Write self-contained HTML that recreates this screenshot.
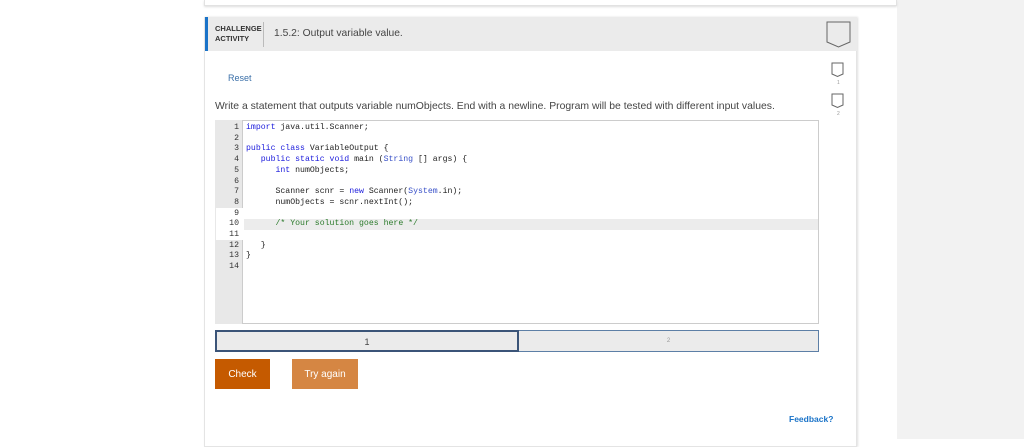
<!DOCTYPE html>
<html><head><meta charset="utf-8"><style>
*{margin:0;padding:0;box-sizing:border-box}
body{width:1024px;height:439px;background:#fff;position:relative;overflow:hidden;font-family:"Liberation Sans",sans-serif}
.abs{position:absolute}
.rbg{left:897px;top:0;width:127px;height:439px;background:#f2f2f2}
.top{left:204px;top:0;width:693px;height:6px;border:1px solid #e2e2e2;border-top:none;box-shadow:0 1px 2px #ddd}
.card{left:204px;top:17px;width:653px;height:430px;border:1px solid #e4e4e4;box-shadow:1px 0 2px #e0e0e0}
.hdr{left:205px;top:17px;width:652px;height:34px;background:#ebebeb;border-left:3px solid #1a73c8}
.ca{left:215px;top:24px;font-size:7.5px;font-weight:bold;color:#333;line-height:10px}
.sep{left:263px;top:22px;width:1px;height:25px;background:#bbb}
.ttl{left:274px;top:28px;font-size:10.3px;color:#444}
.reset{left:228px;top:73px;font-size:9px;color:#3a6fa8}
.inst{left:215px;top:101px;font-size:10.4px;color:#444;white-space:nowrap}
.ed{left:215px;top:120px;width:604px;height:204px;border:1px solid #ccc;background:#fff}
.gut{left:215px;top:120px;width:28px;height:204px;background:#e8e8e8;border-right:1px solid #ccc}
.code{left:215px;top:123px;font-family:"Liberation Mono",monospace;font-size:8.2px;line-height:10.7px;white-space:pre;color:#222}
.ln{display:inline-block;width:24px;text-align:right;margin-right:7px;color:#333}
.k{color:#1b1bdc}.c{color:#2a7a2a}.s{color:#3850c8}
.hl{left:244px;top:219px;width:574px;height:10.7px;background:#ececec}
.pb{top:330px;height:22px;background:#ebebeb;font-size:9px;text-align:center;line-height:20px}
.bt{top:359px;height:30px;color:#fff;font-size:10px;text-align:center;line-height:31px}
.fb{left:789px;top:414px;font-size:8.5px;font-weight:bold;color:#1a73c8}
</style></head><body>
<div class="abs rbg"></div>
<div class="abs top"></div>
<div class="abs card"></div>
<div class="abs hdr"></div>
<div class="abs ca">CHALLENGE<br>ACTIVITY</div>
<div class="abs sep"></div>
<div class="abs ttl">1.5.2: Output variable value.</div>
<svg class="abs" style="left:826px;top:21px" width="26" height="28"><path d="M1 1H24V21L12.5 26L1 21Z" fill="none" stroke="#666" stroke-width="1"/></svg>
<svg class="abs" style="left:831px;top:62px" width="14" height="16"><path d="M1 1H12V12L6.5 14.5L1 12Z" fill="none" stroke="#666" stroke-width="1"/></svg>
<div class="abs" style="left:837px;top:80px;font-size:5px;color:#999">1</div>
<svg class="abs" style="left:831px;top:93px" width="14" height="16"><path d="M1 1H12V12L6.5 14.5L1 12Z" fill="none" stroke="#666" stroke-width="1"/></svg>
<div class="abs" style="left:837px;top:111px;font-size:5px;color:#999">2</div>
<div class="abs reset">Reset</div>
<div class="abs inst">Write a statement that outputs variable numObjects. End with a newline. Program will be tested with different input values.</div>
<div class="abs ed"></div>
<div class="abs gut"></div>
<div class="abs" style="left:216px;top:208px;width:27px;height:32px;background:#fff"></div>
<div class="abs hl"></div>
<div class="abs code"><span class="ln">1</span><span class="k">import</span> java.util.Scanner;
<span class="ln">2</span>
<span class="ln">3</span><span class="k">public class</span> VariableOutput {
<span class="ln">4</span>   <span class="k">public static void</span> main (<span class="s">String</span> [] args) {
<span class="ln">5</span>      <span class="k">int</span> numObjects;
<span class="ln">6</span>
<span class="ln">7</span>      Scanner scnr = <span class="k">new</span> Scanner(<span class="s">System</span>.in);
<span class="ln">8</span>      numObjects = scnr.nextInt();
<span class="ln">9</span>
<span class="ln">10</span>      <span class="c">/* Your solution goes here */</span>
<span class="ln">11</span>
<span class="ln">12</span>   }
<span class="ln">13</span>}
<span class="ln">14</span></div>
<div class="abs pb" style="left:518px;width:301px;border:1px solid #5d7fa6;color:#999;font-size:6px">2</div>
<div class="abs pb" style="left:215px;width:304px;border:2px solid #3b5478;color:#444">1</div>
<div class="abs bt" style="left:215px;width:55px;background:#c55a00">Check</div>
<div class="abs bt" style="left:292px;width:66px;background:#d58643">Try again</div>
<div class="abs fb">Feedback?</div>
</body></html>
